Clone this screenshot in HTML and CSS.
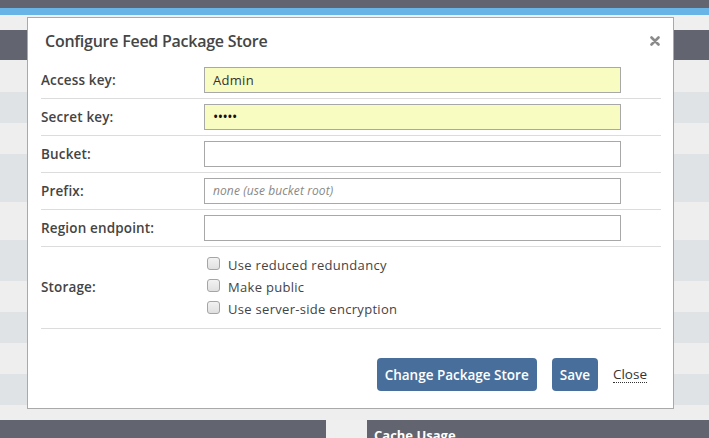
FILE: index.html
```html
<!DOCTYPE html>
<html>
<head>
<meta charset="utf-8">
<link rel="stylesheet" href="styles.css">
</head>
<body>
<div class="page">
  <div class="topbar"></div>
  <div class="bluebar"></div>
  <div class="gap"></div>
  <div class="header"></div>
  <div class="rows">
    <div class="row light h32"></div>
    <div class="row stripe h31"></div>
    <div class="row light h31"></div>
    <div class="row stripe h48"></div>
    <div class="row light h38"></div>
    <div class="row stripe h41"></div>
    <div class="row light h31"></div>
    <div class="row stripe h31"></div>
    <div class="row light h31"></div>
    <div class="row stripe h31"></div>
    <div class="row light h15"></div>
  </div>
  <div class="panels">
    <div class="panel left"></div>
    <div class="panel right"><span class="panel-title">Cache Usage</span></div>
  </div>
</div>

<div class="modal">
  <div class="modal-head">
    <span class="modal-title">Configure Feed Package Store</span>
    <svg class="close-x" width="10" height="10" viewBox="0 0 10 10"><path d="M1.5 1.5 L8.5 8.5 M8.5 1.5 L1.5 8.5" stroke="#8a8a8a" stroke-width="2.6" stroke-linecap="round"/></svg>
  </div>
  <div class="form">
    <div class="frow">
      <label class="flabel">Access key:</label>
      <div class="finput yellow">Admin</div>
    </div>
    <div class="frow">
      <label class="flabel">Secret key:</label>
      <div class="finput yellow dots">•••••</div>
    </div>
    <div class="frow">
      <label class="flabel">Bucket:</label>
      <div class="finput"></div>
    </div>
    <div class="frow">
      <label class="flabel">Prefix:</label>
      <div class="finput placeholder">none (use bucket root)</div>
    </div>
    <div class="frow">
      <label class="flabel">Region endpoint:</label>
      <div class="finput"></div>
    </div>
    <div class="frow storage">
      <label class="flabel">Storage:</label>
      <div class="checks">
        <div class="check"><span class="box"></span>Use reduced redundancy</div>
        <div class="check"><span class="box"></span>Make public</div>
        <div class="check"><span class="box"></span>Use server-side encryption</div>
      </div>
    </div>
  </div>
  <div class="footer">
    <button class="btn">Change Package Store</button>
    <button class="btn">Save</button>
    <span class="close-link">Close</span>
  </div>
</div>
</body>
</html>
```

FILE: styles.css
```css
html, body {
  margin: 0;
  padding: 0;
}
body {
  width: 709px;
  height: 438px;
  overflow: hidden;
  position: relative;
  font-family: "Open Sans", "Liberation Sans", sans-serif;
  background: #efefef;
}
.page {
  display: flex;
  flex-direction: column;
}
.topbar { height: 8px; background: #62656f; }
.bluebar { height: 7px; background: #68b4e7; }
.gap { height: 15px; background: #efefef; }
.header { height: 30px; background: #62656f; }
.rows { display: flex; flex-direction: column; }
.light { background: #eeeeee; }
.stripe { background: #e0e3e6; }
.h15 { height: 15px; }
.h31 { height: 31px; }
.h32 { height: 32px; }
.h38 { height: 38px; }
.h41 { height: 41px; }
.h48 { height: 48px; }
.panels {
  display: flex;
  gap: 41px;
  height: 18px;
}
.panel { background: #62656f; height: 30px; }
.panel.left { width: 326px; }
.panel.right { flex: 1; padding-left: 7px; }
.panel-title {
  display: block;
  color: #fff;
  font-weight: 700;
  font-size: 13px;
  line-height: 14px;
  margin-top: 8px;
}

.modal {
  position: absolute;
  left: 27px;
  top: 17px;
  width: 647px;
  height: 392px;
  box-sizing: border-box;
  background: #fff;
  border: 1px solid #a9a9a9;
}
.modal-head {
  height: 44px;
  display: flex;
  align-items: center;
  justify-content: space-between;
  padding: 0 13px 0 17px;
  box-sizing: border-box;
}
.modal-title {
  font-size: 16px;
  font-weight: 600;
  color: #454545;
  letter-spacing: -0.25px;
  margin-top: 1px;
}
.close-x { margin-top: 2px; }

.form {
  padding: 0 12px 0 13px;
}
.frow {
  display: flex;
  align-items: center;
  padding: 5px 0;
  border-bottom: 1px solid #dcdcdc;
}
.flabel {
  width: 163px;
  flex: none;
  font-size: 13.5px;
  font-weight: 600;
  color: #444;
  letter-spacing: 0.15px;
}
.finput {
  width: 417px;
  height: 26px;
  box-sizing: border-box;
  border: 1px solid #a8a8a8;
  background: #fff;
  font-size: 13px;
  color: #333;
  padding-left: 8px;
  line-height: 24px;
  letter-spacing: 0.3px;
}
.finput.yellow { background: #f9fcc0; }
.finput.dots { font-size: 14px; letter-spacing: -0.5px; color: #111; }
.finput.placeholder {
  font-style: italic;
  color: #888;
  font-size: 12px;
  letter-spacing: 0.1px;
}
.frow.storage {
  padding: 7px 0 8px;
}
.checks {
  display: flex;
  flex-direction: column;
}
.check {
  height: 22px;
  display: flex;
  align-items: center;
  font-size: 13px;
  color: #444;
  letter-spacing: 0.3px;
}
.box {
  width: 11px;
  height: 11px;
  border: 1px solid #a5a5a5;
  border-radius: 3px;
  background: linear-gradient(#f2f2f2, #e0e0e0);
  margin: 0 8px 0 3px;
  position: relative;
  top: -2px;
}
.footer {
  display: flex;
  justify-content: flex-end;
  align-items: center;
  padding: 29px 26px 0 0;
  gap: 15px;
}
.btn {
  height: 33px;
  border: none;
  border-radius: 4px;
  background: #486f9c;
  color: #fff;
  font-family: "Open Sans", "Liberation Sans", sans-serif;
  font-size: 13.5px;
  font-weight: 600;
  padding: 0 8px;
}
.close-link {
  font-size: 13.5px;
  color: #333;
  border-bottom: 1px dotted #333;
  line-height: 16px;
}
```
